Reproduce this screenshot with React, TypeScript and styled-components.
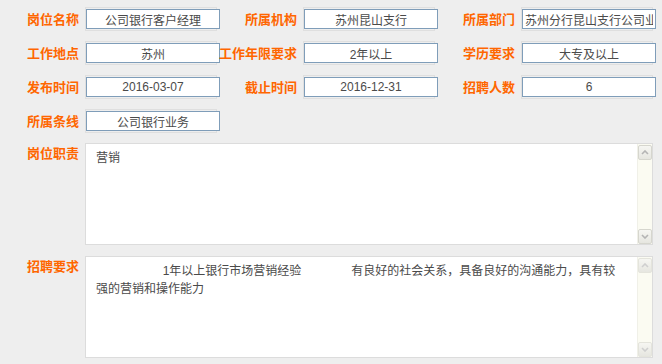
import { Fragment } from "react";
import styled, { createGlobalStyle } from "styled-components";

const GlobalStyle = createGlobalStyle`
  html, body {
    margin: 0;
    padding: 0;
    background: #eeeeee;
    font-family: "Liberation Sans", "Noto Sans CJK SC", sans-serif;
  }
`;

const Page = styled.div`
  width: 662px;
  height: 364px;
  padding-top: 2px;
  box-sizing: border-box;
  overflow: hidden;
`;

const FieldGrid = styled.div`
  display: grid;
  grid-template-columns: 85px 132px 86px 132px 86px 132px;
  grid-auto-rows: 34px;
  align-items: center;
`;

const Label = styled.div<{ $top?: boolean }>`
  align-self: ${(p) => (p.$top ? "start" : "center")};
  padding: ${(p) => (p.$top ? "2px 6px 0 0" : "0 6px 0 0")};
  text-align: right;
  white-space: nowrap;
  font-family: "Noto Sans CJK SC", sans-serif;
  font-size: 13px;
  line-height: 16px;
  font-weight: 700;
  color: #ff6600;
`;

const Frame = styled.div`
  width: 132px;
  height: 24px;
  box-sizing: border-box;
  border: 1px solid #dfdfdf;
  padding-top: 1px;
`;

const Field = styled.input`
  display: block;
  width: 134px;
  height: 20px;
  box-sizing: border-box;
  margin: 0;
  padding: 0 2px;
  border: 1px solid #7f9db9;
  background: #ffffff;
  font-family: "Liberation Sans", "Noto Sans CJK SC", sans-serif;
  font-size: 12px;
  color: #4a4a4a;
  text-align: center;
  outline: none;
`;

const TextRows = styled.div`
  display: grid;
  grid-template-columns: 85px 568px;
  grid-auto-rows: 102px;
  row-gap: 11px;
  margin-top: 5px;
`;

const TextBox = styled.div`
  display: flex;
  box-sizing: border-box;
  border: 1px solid #dcdcdc;
  background: #ffffff;
`;

const Area = styled.textarea`
  flex: 1;
  margin: 0;
  padding: 5px 12px 0 10px;
  border: none;
  resize: none;
  overflow: hidden;
  background: #ffffff;
  font-family: "Liberation Sans", "Noto Sans CJK SC", sans-serif;
  font-size: 12px;
  line-height: 18px;
  color: #4a4a4a;
  white-space: pre-wrap;
  outline: none;
`;

const ScrollTrack = styled.div`
  width: 15px;
  padding: 1px 1px 0 0;
  box-sizing: border-box;
  display: flex;
  flex-direction: column;
  justify-content: space-between;
  background: #fbfbf2;
  border-left: 1px solid #f0f0e8;
`;

const ScrollButton = styled.div<{ $faint?: boolean }>`
  width: 14px;
  height: 15px;
  box-sizing: border-box;
  display: flex;
  align-items: center;
  justify-content: center;
  border: 1px solid ${(p) => (p.$faint ? "#e4e4dc" : "#d6d6ce")};
  border-radius: 2px;
  background: linear-gradient(#f6f6f2, #e6e6e0);
  color: ${(p) => (p.$faint ? "#cfcfcf" : "#b4b4b4")};
`;

const Chevron = ({ down }: { down?: boolean }) => (
  <svg width="8" height="5" viewBox="0 0 8 5">
    <polyline
      points={down ? "1,1 4,4 7,1" : "1,4 4,1 7,4"}
      fill="none"
      stroke="currentColor"
      strokeWidth="1.6"
    />
  </svg>
);

const fields: [string, string][] = [
  ["岗位名称", "公司银行客户经理"],
  ["所属机构", "苏州昆山支行"],
  ["所属部门", "苏州分行昆山支行公司业务部"],
  ["工作地点", "苏州"],
  ["工作年限要求", "2年以上"],
  ["学历要求", "大专及以上"],
  ["发布时间", "2016-03-07"],
  ["截止时间", "2016-12-31"],
  ["招聘人数", "6"],
  ["所属条线", "公司银行业务"],
];

const pad = (n: number) => " ".repeat(n);

const requirement =
  pad(20) + "1年以上银行市场营销经验" + pad(15) + "有良好的社会关系，具备良好的沟通能力，具有较强的营销和操作能力";

const TextField = ({ value, faint }: { value: string; faint?: boolean }) => (
  <TextBox>
    <Area readOnly value={value} />
    <ScrollTrack>
      <ScrollButton $faint={faint}>
        <Chevron />
      </ScrollButton>
      <ScrollButton $faint={faint}>
        <Chevron down />
      </ScrollButton>
    </ScrollTrack>
  </TextBox>
);

const App = () => {
  return (
    <Page>
      <GlobalStyle />
      <FieldGrid>
        {fields.map(([label, value]) => (
          <Fragment key={label}>
            <Label>{label}</Label>
            <Frame>
              <Field readOnly value={value} />
            </Frame>
          </Fragment>
        ))}
      </FieldGrid>
      <TextRows>
        <Label $top>岗位职责</Label>
        <TextField value="营销" />
        <Label $top>招聘要求</Label>
        <TextField value={requirement} faint />
      </TextRows>
    </Page>
  );
};

export default App;
